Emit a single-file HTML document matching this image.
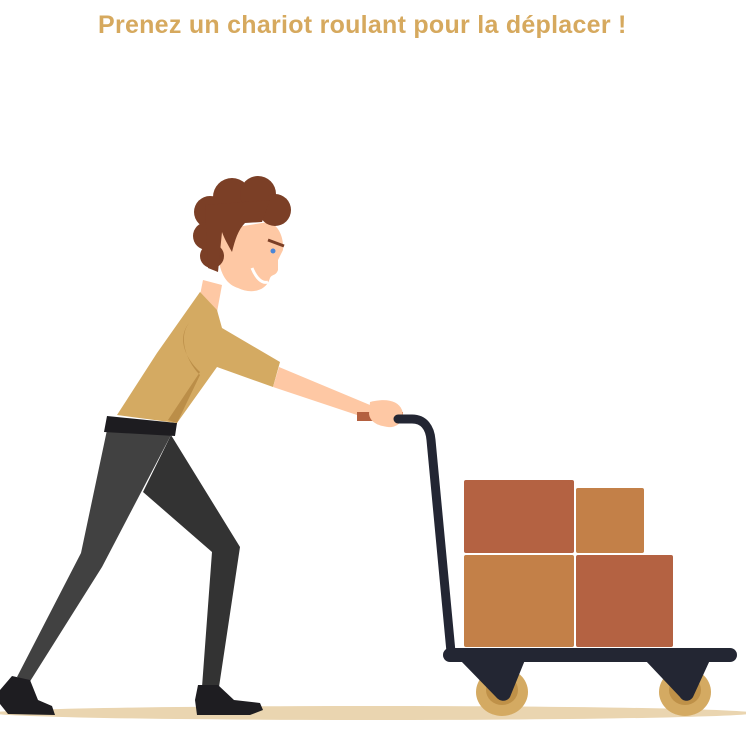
<!DOCTYPE html>
<html><head><meta charset="utf-8"><style>
html,body{margin:0;padding:0;background:#fff;width:746px;height:743px;overflow:hidden}
.t{position:absolute;left:98px;top:9px;font:bold 25px "Liberation Sans",sans-serif;color:#d6a95e;white-space:nowrap;letter-spacing:0.27px;line-height:32px}
svg{position:absolute;left:0;top:0}
</style></head><body>
<div class="t">Prenez un chariot roulant pour la déplacer !</div>
<svg width="746" height="743" viewBox="0 0 746 743">
<ellipse cx="373" cy="713" rx="380" ry="7" fill="#ead5b0"/>
<polygon points="107,430 171,435 102,567 29,683 17,677 81,553" fill="#414141"/>
<path d="M12,676 L30,680 L38,700 L52,706 L55,715 L8,714 L0,704 L0,690 Z" fill="#1e1d21"/>
<polygon points="171,435 240,547 219,687 202,687 212,552 143,492" fill="#333333"/>
<path d="M198,685 L218,685 L234,700 L260,703 L263,710 L250,715 L197,715 L195,700 Z" fill="#1e1d21"/>
<polygon points="107,416 177,423 175,436 104,432" fill="#1d1c20"/>
<polygon points="203,280 222,285 217,312 200,295" fill="#fec8a4"/>
<polygon points="200,292 217,310 222,328 280,362 273,387 217,367 177,423 117,415 157,353" fill="#d4aa62"/>
<path d="M190,322 C178,335 185,360 200,375 L177,423 L168,420 L200,372 C182,355 178,335 190,322 Z" fill="#bb8e48"/>
<polygon points="279,367 370,405 372,420 273,387" fill="#fec8a4"/>
<rect x="357" y="412" width="46" height="9" fill="#b4603f"/>
<path d="M370,402 C385,398 398,400 402,410 C405,420 398,428 388,427 C378,426 370,422 369,414 Z" fill="#fec8a4"/>
<path d="M218,230 L268,222 C280,225 284,240 283,250 L278,260 L278,270 C276,276 272,274 270,278 C266,292 250,294 238,288 C225,284 215,270 218,230 Z" fill="#fec8a4"/>
<path d="M252,268 C256,278 262,284 268,282" stroke="#fff" stroke-width="3" fill="none"/>
<circle cx="273" cy="251" r="2.5" fill="#4a86d8"/>
<path d="M268,240 L284,246" stroke="#7b3f26" stroke-width="3"/>
<g fill="#7b3f26">
<circle cx="232" cy="197" r="19"/>
<circle cx="258" cy="194" r="18"/>
<circle cx="275" cy="210" r="16"/>
<circle cx="210" cy="212" r="16"/>
<circle cx="207" cy="236" r="14"/>
<circle cx="212" cy="256" r="12"/>
<path d="M205,205 L270,200 L262,222 L245,223 C238,230 235,240 232,252 C228,245 224,238 222,232 L218,272 L208,268 Z"/>
</g>
<path d="M398,419 L412,419 C424,419 430,428 431,440 L451,652" stroke="#232633" stroke-width="9" fill="none" stroke-linecap="round"/>
<rect x="464" y="480" width="110" height="73" rx="2" fill="#b46242"/>
<rect x="576" y="488" width="68" height="65" rx="2" fill="#c38048"/>
<rect x="464" y="555" width="110" height="92" rx="2" fill="#c38048"/>
<rect x="576" y="555" width="97" height="92" rx="2" fill="#b46242"/>
<ellipse cx="502" cy="692" rx="26" ry="24" fill="#d4aa62"/>
<ellipse cx="502" cy="690" rx="16" ry="15" fill="#bf9148"/>
<ellipse cx="685" cy="692" rx="26" ry="24" fill="#d4aa62"/>
<ellipse cx="685" cy="690" rx="16" ry="15" fill="#bf9148"/>
<rect x="443" y="648" width="294" height="14" rx="7" fill="#232633"/>
<path d="M460,660 L525,660 L510,697 C507,702 500,702 496,697 Z" fill="#232633"/>
<path d="M645,660 L710,660 L693,697 C690,702 683,702 680,697 Z" fill="#232633"/>
</svg>
</body></html>
